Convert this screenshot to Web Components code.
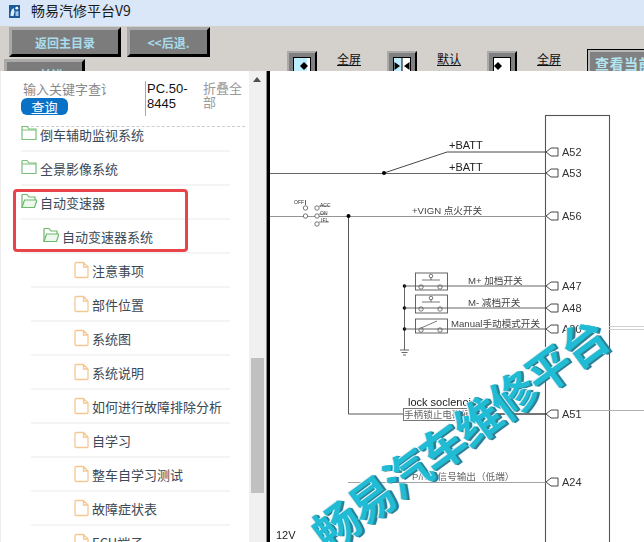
<!DOCTYPE html>
<html lang="zh">
<head>
<meta charset="utf-8">
<title>畅易汽修平台V9</title>
<style>
  html, body { margin: 0; width: 644px; height: 542px; overflow: hidden; background: #fff; }
  body { font-family: "Noto Sans CJK SC", "Liberation Sans", sans-serif; display: flex; flex-direction: column; }
</style>
</head>
<body>
  <title-bar>畅易汽修平台V9</title-bar>
  <tool-bar>
    <nav-button slot="nav1" style="width:112px">返回主目录</nav-button>
    <nav-button slot="nav1" style="width:83px">&lt;&lt;后退.</nav-button>
    <nav-button slot="nav2" style="width:81px">&gt;&gt;前进</nav-button>
    <view-link mode="left">全屏<br>菜单</view-link>
    <view-link mode="both">默认<br>视图</view-link>
    <view-link mode="right">全屏<br>内容</view-link>
    <flat-button>查看当前</flat-button>
  </tool-bar>
  <main-area>
    <side-panel slot="side">
      <tree-row kind="closed" level="0">倒车辅助监视系统</tree-row>
      <tree-row kind="closed" level="0">全景影像系统</tree-row>
      <tree-row kind="open" level="0">自动变速器</tree-row>
      <tree-row kind="open" level="1">自动变速器系统</tree-row>
      <tree-row kind="doc" level="2">注意事项</tree-row>
      <tree-row kind="doc" level="2">部件位置</tree-row>
      <tree-row kind="doc" level="2">系统图</tree-row>
      <tree-row kind="doc" level="2">系统说明</tree-row>
      <tree-row kind="doc" level="2">如何进行故障排除分析</tree-row>
      <tree-row kind="doc" level="2">自学习</tree-row>
      <tree-row kind="doc" level="2">整车自学习测试</tree-row>
      <tree-row kind="doc" level="2">故障症状表</tree-row>
      <tree-row kind="doc" level="2">ECU端子</tree-row>
    </side-panel>
    <wiring-view slot="view"></wiring-view>
  </main-area>

<script>
class TitleBar extends HTMLElement{
  connectedCallback(){
    let shadowRoot = this.attachShadow({mode: 'open'});
    shadowRoot.innerHTML = `
    <style>
      :host{display:flex;align-items:flex-start;flex:none;box-sizing:border-box;height:26px;background:#d9e7f8;padding-left:9px;gap:11px;
        font-size:14px;line-height:21px;color:#1a1a1a;}
      svg{display:block;margin-top:5px;}
    </style>
    <svg width="11" height="13" viewBox="0 0 11 13">
      <rect width="11" height="13" fill="#1c5b99"/>
      <path d="M1.5 11 C1.5 7 2.5 4.5 4.5 3 L5.5 6.5 L4.5 11Z" fill="#dfeefb"/>
      <circle cx="7.8" cy="3.2" r="1.4" fill="#fff"/>
      <path d="M6.5 6.5 L9.5 6 L9.5 11 L6.5 11Z" fill="#9fc8ea"/>
    </svg>
    <span><slot></slot></span>`;
  }
}
customElements.define('title-bar', TitleBar);

class ToolBar extends HTMLElement{
  connectedCallback(){
    let shadowRoot = this.attachShadow({mode: 'open'});
    shadowRoot.innerHTML = `
    <style>
      :host{display:flex;flex:none;height:45px;overflow:hidden;background:#d4d0cc;}
      .nav{width:287px;flex:none;display:flex;flex-direction:column;gap:2px;padding-top:1px;}
      .row{display:flex;gap:6px;padding-left:9px;}
      .row.second{padding-left:4px;}
      .views{display:flex;align-items:flex-start;padding-top:23px;}
    </style>
    <div class="nav">
      <div class="row"><slot name="nav1"></slot></div>
      <div class="row second"><slot name="nav2"></slot></div>
    </div>
    <div class="views"><slot></slot></div>`;
  }
}
customElements.define('tool-bar', ToolBar);

class NavButton extends HTMLElement{
  connectedCallback(){
    let shadowRoot = this.attachShadow({mode: 'open'});
    shadowRoot.innerHTML = `
    <style>
      :host{display:flex;align-items:center;justify-content:center;box-sizing:border-box;height:30px;
        background:#7c7c7c;color:#a9dcec;font-size:12px;font-weight:700;
        border-style:solid;border-width:3px;
        border-color:#a9a9a9 #000 #000 #a9a9a9;}
    </style>
    <slot></slot>`;
  }
}
customElements.define('nav-button', NavButton);

class ViewLink extends HTMLElement{
  connectedCallback(){
    let shadowRoot = this.attachShadow({mode: 'open'});
    let mode = this.getAttribute('mode');
    // pane of each icon: cyan part width and the arrows
    let panes = {
      left: `<rect x="1" y="1" width="13" height="22" fill="#bdeeff"/>
             <path d="M11 5 L15 9 L11 13 L7 9Z" fill="#000"/>`,
      both: `<rect x="1" y="1" width="8" height="22" fill="#bdeeff"/>
             <path d="M9 1 V23" stroke="#000"/>
             <path d="M1.5 5 L7 9 L1.5 13Z M16.5 5 L11 9 L16.5 13Z" fill="#000"/>`,
      right: `<path d="M5 5 L9 9 L5 13 L1 9Z" fill="#000"/>`
    };
    shadowRoot.innerHTML = `
    <style>
      :host{display:flex;width:100px;flex:none;font-size:12px;line-height:18px;color:#111;}
      .ico{width:30px;height:30px;box-sizing:border-box;background:#808080;flex:none;padding:4px 0 0 4px;
        border-style:solid;border-width:2px;border-color:#aaa #000 #000 #aaa;margin-top:2px;}
      .ico svg{display:block;}
      .txt{margin:1px 0 0 20px;text-decoration:underline;text-underline-offset:1px;}
    </style>
    <div class="ico">
      <svg width="18" height="24" viewBox="0 0 18 24">
        <rect x=".5" y=".5" width="17" height="23" fill="#fff" stroke="#000"/>
        ${panes[mode]}
      </svg>
    </div>
    <div class="txt"><slot></slot></div>`;
  }
}
customElements.define('view-link', ViewLink);

class FlatButton extends HTMLElement{
  connectedCallback(){
    let shadowRoot = this.attachShadow({mode: 'open'});
    shadowRoot.innerHTML = `
    <style>
      :host{display:block;flex:none;box-sizing:border-box;width:70px;height:30px;
        border:1px solid #000;background:#808080;box-shadow:inset 0 0 0 2px #b9b9b9;padding:3px 0 0 7px;
        color:#b3e4f2;font-size:14px;line-height:20px;font-weight:700;white-space:nowrap;letter-spacing:.5px;}
    </style>
    <slot></slot>`;
  }
}
customElements.define('flat-button', FlatButton);

class MainArea extends HTMLElement{
  connectedCallback(){
    let shadowRoot = this.attachShadow({mode: 'open'});
    shadowRoot.innerHTML = `
    <style>
      :host{display:flex;flex:1;min-height:0;overflow:hidden;background:#fff;}
      .rule{flex:none;width:4px;background:#000;border-left:1px solid #8d8d8d;box-sizing:border-box;}
    </style>
    <slot name="side"></slot>
    <div class="rule"></div>
    <slot name="view"></slot>`;
  }
}
customElements.define('main-area', MainArea);

class SidePanel extends HTMLElement{
  connectedCallback(){
    let shadowRoot = this.attachShadow({mode: 'open'});
    shadowRoot.innerHTML = `
    <style>
      :host{display:flex;position:relative;flex:none;width:266px;height:471px;overflow:hidden;background:#fff;}
      .col{width:249px;flex:none;box-sizing:border-box;border-left:1px solid #eee;overflow:hidden;}
      .search{display:flex;box-sizing:border-box;height:56px;margin:0 4px 0 20px;padding-top:10px;border-bottom:1px dashed #ccc;}
      .q{width:124px;flex:none;}
      .ph{width:83px;margin:0 0 1px 2px;overflow:hidden;white-space:nowrap;font-size:13px;line-height:16px;color:#8a8a8a;}
      .btn{display:block;width:47px;height:17px;border-radius:6px;background:#0a72c6;color:#fff;
        font-size:13px;line-height:17px;text-align:center;text-decoration:underline;}
      .pc{width:58px;flex:none;height:35px;border-left:1px solid #aaa;padding-left:1px;box-sizing:border-box;
        font-family:"Liberation Sans","Noto Sans CJK SC",sans-serif;font-size:13px;line-height:15px;color:#111;}
      .fold{width:40px;font-size:13px;line-height:14px;color:#9a9a9a;}
      .tree{margin-top:-9px;}
      .bar{width:17px;flex:none;background:#f0f0f0;position:relative;}
      .arrow{position:absolute;left:4px;top:6px;width:0;height:0;border:4px solid transparent;border-top:0;border-bottom:5px solid #505050;}
      .thumb{position:absolute;left:2px;top:287px;width:13px;height:135px;background:#c0c0c0;}
      .mark{position:absolute;left:13px;top:118px;width:175px;height:63px;box-sizing:border-box;
        border:3px solid #e8444a;border-radius:4px;pointer-events:none;}
    </style>
    <div class="col">
      <div class="search">
        <div class="q">
          <div class="ph">输入关键字查询</div>
          <span class="btn">查询</span>
        </div>
        <div class="pc">PC.50-8445</div>
        <div class="fold">折叠全部</div>
      </div>
      <div class="tree"><slot></slot></div>
    </div>
    <div class="bar"><div class="arrow"></div><div class="thumb"></div></div>
    <div class="mark"></div>`;
  }
}
customElements.define('side-panel', SidePanel);

class TreeRow extends HTMLElement{
  connectedCallback(){
    let shadowRoot = this.attachShadow({mode: 'open'});
    let kind = this.getAttribute('kind');
    let level = this.getAttribute('level');
    let pad = {0: 0, 1: 22, 2: 43}[level];
    let edge = level == 2 ? 10 : 0;
    let icons = {
      closed: '<path d="M1 14.5 V2.5 Q1 1.5 2 1.5 H6 L8 4 H15 V14.5Z" fill="none" stroke="#78c078" stroke-width="1.2"/><path d="M1 5 H15" stroke="#78c078"/>',
      open: '<path d="M1 14.5 V2.5 Q1 1.5 2 1.5 H6 L8 4 H14 V7" fill="none" stroke="#6cb86c" stroke-width="1.2"/><path d="M1 14.5 L3.5 7 H16 L13.5 14.5Z" fill="#eef8ee" stroke="#6cb86c" stroke-width="1.2"/>',
      doc: '<path d="M2 1.5 H9.5 L14 6 V15.5 Q14 16.5 13 16.5 H2 Q1 16.5 1 15.5 V2.5 Q1 1.5 2 1.5Z M9.5 1.5 V6 H14" fill="none" stroke="#f5c893" stroke-width="1.3"/>'
    };
    shadowRoot.innerHTML = `
    <style>
      :host{display:block;box-sizing:border-box;height:34px;margin:0 19px 0 ${20 + edge}px;border-bottom:2px solid #f4f4f4;}
      .in{display:flex;align-items:center;height:32px;padding-left:${pad}px;gap:${level == 2 ? 2 : 3}px;
        font-size:13px;color:#3b4856;white-space:nowrap;}
      svg{display:block;flex:none;}
    </style>
    <div class="in">
      <svg width="16" height="18" viewBox="0 0 16 18">${icons[kind]}</svg>
      <span><slot></slot></span>
    </div>`;
  }
}
customElements.define('tree-row', TreeRow);

class WiringView extends HTMLElement{
  connectedCallback(){
    let shadowRoot = this.attachShadow({mode: 'open'});
    // pins on the connector box: [name, y]
    let pins = [['A52',152],['A53',173],['A56',216],['A47',286],['A48',308],['A20',329],['A51',414],['A24',482]];
    let pinMarks = pins.map(p => `
      <path d="M546 ${p[1]} L551 ${p[1]-4} H558 V${p[1]+4} H551Z" fill="#fff" stroke="#333" stroke-width=".9"/>
      <text x="562" y="${p[1]+4}" fill="#333">${p[0]}</text>`).join('');
    let sw = (y1, y2, ly, shut) => `
      <rect x="415.5" y="${y1}" width="32" height="${y2-y1}" fill="#fff" stroke="#555" stroke-width=".9"/>
      <circle cx="421" cy="${ly+1}" r="2.2" fill="#fff" stroke="#555" stroke-width=".8"/>
      <circle cx="440" cy="${ly+1}" r="2.2" fill="#fff" stroke="#555" stroke-width=".8"/>
      ${shut ? `<path d="M421 ${ly-1} L437 ${ly-8}" stroke="#555" stroke-width=".8"/>`
             : `<path d="M422 ${ly-6} H440 M431 ${ly-6} V${ly-9}" stroke="#555" stroke-width=".8"/><circle cx="431" cy="${ly-10}" r="1.8" fill="#fff" stroke="#555" stroke-width=".8"/>`}`;
    shadowRoot.innerHTML = `
    <style>
      :host{display:block;position:relative;flex:none;width:374px;height:471px;overflow:hidden;background:#fff;}
      svg{display:block;filter:blur(.3px);font-family:"Liberation Sans","Noto Sans CJK SC",sans-serif;font-size:11px;}
      .wm{position:absolute;left:188px;top:362px;transform:translate(-50%,-50%) rotate(-36.4deg);white-space:nowrap;
        font-family:"Noto Sans CJK SC",sans-serif;font-size:46px;line-height:1;font-weight:700;letter-spacing:-2px;color:#20bcd6;
        text-shadow:-1px -1px 0 #e4f9fc,1px 1px 0 #2a8ea6,2px 2px 0 #47707e;}
      .cn{font-size:9.6px;fill:#444;}
      .soft{font-size:9.6px;fill:#666;}
    </style>
    <svg width="374" height="471" viewBox="270 71 374 471">
      <rect x="545.5" y="115.5" width="64" height="480" fill="none" stroke="#555" stroke-width="1.1"/>
      <g fill="none" stroke="#555" stroke-width=".9">
        <path d="M270 173.5 H546"/>
        <path d="M384 173 L447 152 H546" stroke="#333"/>
        <path d="M270 216.5 H546" stroke="#888"/>
        <path d="M348.5 216 V414 H546" stroke="#444"/>
        <path d="M404.5 286 V350"/>
        <path d="M400 350 H409 M401.5 352.5 H407.5 M403 355 H406"/>
        <path d="M348 482.5 H546" stroke="#999"/>
        <path d="M571 410.5 H644" stroke="#aaa"/>
        <path d="M609 326.5 H644 M609 329.5 H644" stroke="#ccc"/>
        <path d="M305.5 200 V205"/>
      </g>
      <g fill="#000">
        <circle cx="384" cy="173" r="2"/><circle cx="348.5" cy="216" r="2"/>
        <circle cx="404.5" cy="286" r="1.8"/><circle cx="404.5" cy="308" r="1.8"/><circle cx="404.5" cy="329" r="1.8"/>
      </g>
      <g fill="#fff" stroke="#555" stroke-width=".8">
        <circle cx="305.5" cy="208" r="2.2"/><circle cx="305.5" cy="216" r="2.2"/>
        <circle cx="317" cy="208" r="2.2"/><circle cx="317" cy="216" r="2.2"/><circle cx="317" cy="224" r="2.2"/>
      </g>
      <path d="M319 206 H329 M319 214 H327 M319 222 H329" stroke="#555" stroke-width=".7"/>
      <g font-size="5" fill="#333">
        <text x="294" y="204">OFF</text><text x="320" y="207">ACC</text><text x="320" y="215">ON</text><text x="321" y="222">IFL</text>
      </g>
      ${sw(273, 290, 286, false)}
      ${sw(295, 313, 308, false)}
      ${sw(319, 333, 329, true)}
      <path d="M404 286 H546 M404 308 H546 M404 329 H546" stroke="#555" stroke-width=".9"/>
      <rect x="403.5" y="408.5" width="70" height="12" fill="#fff" stroke="#777"/>
      <path d="M473 414 H546" stroke="#333" stroke-width=".9"/>
      <g fill="#222">
        <text x="449" y="149">+BATT</text>
        <text x="449" y="171">+BATT</text>
        <text x="412" y="214" class="cn">+VIGN 点火开关</text>
        <text x="468" y="284" class="cn">M+ 加档开关</text>
        <text x="468" y="306" class="cn">M- 减档开关</text>
        <text x="451" y="327" class="cn">Manual手动模式开关</text>
        <text x="408" y="406">lock soclenoid</text>
        <text x="404" y="418" class="soft">手柄锁止电磁阀</text>
        <text x="412" y="480" class="soft">P/N挡信号输出（低端）</text>
        <text x="276" y="539">12V</text>
      </g>
      ${pinMarks}
    </svg>
    <div class="wm">畅易汽车维修平台</div>`;
  }
}
customElements.define('wiring-view', WiringView);
</script>
</body>
</html>
